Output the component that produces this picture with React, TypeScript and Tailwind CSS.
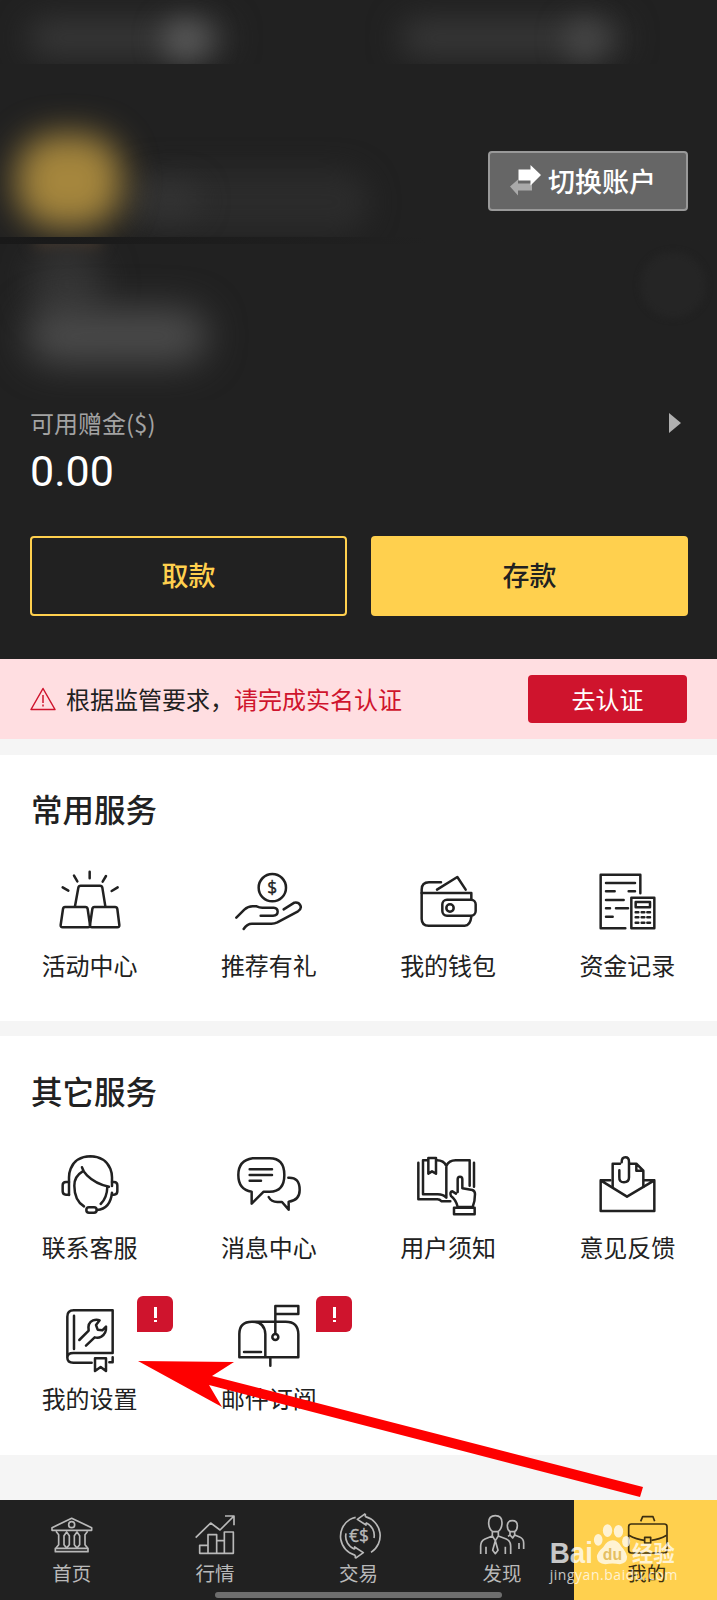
import React from "react";

type ServiceItem = {
  label: string;
  viewBox: string;
  icon: React.ReactNode;
  alert?: boolean;
};

const commonServices: ServiceItem[] = [
  {
    label: "活动中心",
    viewBox: "161 42 216 216",
    icon: (
      <>
        <path d="M187 112l17 10M221 77l10 17M268 65v20M317 78l-10 17M352 112l-18 11" />
        <path d="M224 169l10-56q1-6 7-6h58q6 0 7 6l9 56" />
        <path d="M194 171h61q6 0 7 6l7 48q1 7-6 7h-76q-7 0-6-7l7-48q1-6 6-6z" />
        <path d="M282 171h62q6 0 7 6l6 48q1 7-6 7h-76q-7 0-6-7l7-48q1-6 6-6z" />
      </>
    ),
  },
  {
    label: "推荐有礼",
    viewBox: "699 42 216 216",
    icon: (
      <>
        <circle cx="817" cy="113" r="41" />
        <text
          x="817"
          y="131"
          textAnchor="middle"
          fontSize="52"
          fill="currentColor"
          stroke="currentColor"
          strokeWidth="1"
          className="font-['Open_Sans',sans-serif]"
        >
          $
        </text>
        <path d="M709 203l24-24q11-10 25-10h12q8 4 17 4h34q12 1 12 12t-14 12h-37" />
        <path d="M731 237q10-16 25-16h58q10 0 18-4l62-33q12-8 7-18t-18-8l-32 20" />
      </>
    ),
  },
  {
    label: "我的钱包",
    viewBox: "165 42 216 216",
    icon: (
      <>
        <path d="M343 147v-18H194v77q0 21 21 21h108q17 0 20-27" />
        <path d="M194 129v-10q0-22 22-22h36M240 119l61-38 25 38" />
        <rect x="256" y="149" width="100" height="48" rx="14" />
        <circle cx="279" cy="174" r="11" />
      </>
    ),
  },
  {
    label: "资金记录",
    viewBox: "703 42 216 216",
    icon: (
      <>
        <path d="M806 235h-74V74h119v56M748 99h87M748 124h26M816 124h19M748 150h53M748 175h12M778 175h36M748 200h20" />
        <rect x="824" y="143" width="69" height="92" />
        <rect x="837" y="156" width="43" height="16" />
        <path d="M837 187h8M855 187h8M872 187h8M837 202h8M855 202h8M872 202h8M837 218h8M855 218h8M872 218h8" />
      </>
    ),
  },
];

const otherServices: ServiceItem[] = [
  {
    label: "联系客服",
    viewBox: "161 48 216 216",
    icon: (
      <>
        <path d="M206 195v-53q0-14 5-26 15-36 59-37 44 1 60 37 5 12 5 26v26" />
        <path d="M206 156h-9q-10 0-10 10v18q0 10 10 10h9M335 156h6q10 0 10 10v18q0 10-10 10h-6" />
        <path d="M251 229q-29-18-29-62 0-28 24-42M245 112q3 12 15 24 26 26 66 34M321 171q-1 33-20 51M335 188q-5 49-45 52" />
        <rect x="258" y="232" width="31" height="16" rx="8" />
      </>
    ),
  },
  {
    label: "消息中心",
    viewBox: "699 48 216 216",
    icon: (
      <>
        <path d="M758 85h51q44 0 44 50t-44 50h-18l-36 36v-36q-40-6-40-50t43-50z" />
        <path d="M749 118h67M749 135h67M749 152h34" />
        <path d="M865 143q34-2 34 37 0 31-33 35v24l-20-23h-14q-18 0-26-15" />
      </>
    ),
  },
  {
    label: "用户须知",
    viewBox: "165 48 216 216",
    icon: (
      <>
        <path d="M212 91h-14v102h44q17 0 26 10V108q-8-17-28-17M268 108q8-17 28-17h42v76M351 98v72M184 98v110h57q7 0 13 6h26" />
        <path d="M214 84h23v47l-12-7-11 7z" />
        <path d="M302 186v-38q0-8 7-8t7 8v27l30 5q8 3 8 12 0 22-7 39h-45q-5-22-20-33-5-12 4-14l11 7" />
        <rect x="291" y="233" width="62" height="20" />
      </>
    ),
  },
  {
    label: "意见反馈",
    viewBox: "703 48 216 216",
    icon: (
      <>
        <path d="M761 151h-29v92h161v-92h-31M732 151l79 49 82-49" />
        <path d="M768 170v-69h22M820 101h19l21 21v48M839 103v19h19" />
        <path d="M795 97q0-15 11-15t11 13v47q0 15-15 15t-14-16v-20" />
      </>
    ),
  },
  {
    label: "我的设置",
    viewBox: "161 51 216 216",
    alert: true,
    icon: (
      <>
        <path d="M337 219V91H220q-19 0-19 19v123q0 15 18 15h55M337 219H219q-18 0-18 14M337 232v15h-10M221 107v100" />
        <path d="M284 235h33v38l-16-12-17 12z" />
        <path d="M237 180l28-28q-4-24 13-31 11-4 20 0l-11 14 5 14 14 2 11-11q2 20-14 30-9 5-20 2l-26 25" />
      </>
    ),
  },
  {
    label: "邮件订阅",
    viewBox: "699 51 216 216",
    alert: true,
    icon: (
      <>
        <path d="M718 232v-70q0-37 38-37t40 37v70zM756 125h68M829 125h28q38 0 38 38v69h-99M732 216h51M811 232v25" />
        <path d="M826 160V78h69v24h-66" />
        <circle cx="826" cy="171" r="9" />
      </>
    ),
  },
];

const tabs = [
  {
    label: "首页",
    viewBox: "143 96 144 144",
    icon: (
      <>
        <path d="M155 143l59-28 60 28v8H155zM165 205h98v10h-98z" />
        <circle cx="214" cy="134" r="9" />
        <path d="M167 154l8 10v30l-8 10M262 154l-8 10v30l8 10M199 156l8 11v27l-8 10-8-10v-27zM230 156l8 11v27l-8 10-8-10v-27z" />
      </>
    ),
  },
  {
    label: "行情",
    viewBox: "573 96 144 144",
    icon: (
      <path d="M587 173l45-44 28 21 42-42M675 108h27v28M624 196h-25v24h101v-64h-27v64M624 220v-56h26v56M650 182h23" />
    ),
  },
  {
    label: "交易",
    viewBox: "-17 96 144 144",
    icon: (
      <>
        <path d="M77 110a59 59 0 0 1 17 107M79 128a42 42 0 0 1 24 46M77 101l-24 17 26 17v-7M77 101v9" />
        <path d="M47 226a59 59 0 0 1-17-107q8-5 18-7M45 208a42 42 0 0 1-26-48M47 235l24-17-26-17v7M47 235v-9" />
        <text
          x="58"
          y="186"
          textAnchor="middle"
          fontSize="52"
          fill="currentColor"
          stroke="currentColor"
          strokeWidth="1"
          className="font-['Open_Sans',sans-serif]"
        >
          €$
        </text>
      </>
    ),
  },
  {
    label: "发现",
    viewBox: "414 96 144 144",
    icon: (
      <>
        <path d="M466 107q20 0 20 21 0 18-12 27h-16q-12-9-12-27 0-21 20-21z" />
        <path d="M457 155v13l-22 9q-13 6-13 21v24M475 155v13l24 9q13 6 13 21v24M438 200v22M496 200v22M457 168l9 14 9-14M466 182l-8 29 8 10 8-10z" />
        <path d="M517 122q15 0 15 15 0 12-8 18h-14q-8-6-8-18 0-15 15-15zM510 155v10l-6 4M524 155v10l15 6q12 5 12 18v18M537 189v18M510 165l8 9 6-9" />
      </>
    ),
  },
  {
    label: "我的",
    viewBox: "849 96 144 144",
    active: true,
    icon: (
      <>
        <rect x="866" y="132" width="115" height="87" rx="8" />
        <path d="M902 124l6-14h31l5 14M867 166q22 13 46 15M980 166q-22 13-46 15" />
        <rect x="914" y="172" width="18" height="17" />
      </>
    ),
  },
];

const Service = ({ item }: { item: ServiceItem }) => (
  <div className="relative flex flex-col items-center">
    <svg
      viewBox={item.viewBox}
      className="h-[72px] w-[72px] overflow-visible"
      fill="none"
      stroke="currentColor"
      strokeWidth="7.500"
      strokeLinecap="round"
      strokeLinejoin="round"
    >
      {item.icon}
    </svg>
    <span className="mt-[11px] mb-[2px] text-2xl leading-9">{item.label}</span>
    {item.alert && (
      <span className="absolute -top-px left-[137px] flex h-9 w-9 items-center justify-center rounded-md rounded-bl-none bg-[#cf142d]">
        <span className="flex flex-col items-center gap-[2px]">
          <i className="block h-[11px] w-[3px] bg-white" />
          <i className="block h-[2px] w-[3px] bg-white" />
        </span>
      </span>
    )}
  </div>
);

const ServiceGrid = ({ items }: { items: ServiceItem[] }) => (
  <div className="mt-8 grid grid-cols-4 gap-y-[30px]">
    {items.map((item) => (
      <Service key={item.label} item={item} />
    ))}
  </div>
);

const Header = () => (
  <header className="h-[659px] bg-[#212121] text-white">
    {/* blurred status bar */}
    <div className="relative h-16 overflow-hidden">
      <div className="absolute left-7 top-5 h-9 w-[200px] rounded-full bg-[#383838] blur-[16px]" />
      <div className="absolute left-[162px] top-5 h-10 w-12 rounded-full bg-[#585858] blur-[14px]" />
      <div className="absolute left-[400px] top-5 h-9 w-[225px] rounded-full bg-[#383838] blur-[16px]" />
      <div className="absolute left-[565px] top-5 h-10 w-10 rounded-full bg-[#484848] blur-[14px]" />
    </div>

    <div className="relative h-[173px] overflow-hidden">
      <div className="absolute left-[120px] top-[106px] h-16 w-[250px] rounded-full bg-[#2b2b2b] blur-[14px]" />
      <div className="absolute left-[140px] top-[118px] h-9 w-[60px] rounded-full bg-[#333] blur-[14px]" />
      <div className="absolute left-[16px] top-[70px] h-[94px] w-[106px] rounded-[40px] bg-[#a5863d] blur-[17px]" />
      <div className="flex justify-end pr-[29px] pt-[87px]">
        <button className="flex h-[60px] w-[200px] items-center rounded border-2 border-[#999] bg-[#666] pl-[20px] text-[27px] font-medium">
          <svg viewBox="0 0 32 32" className="mr-[6px] h-8 w-8">
            <path d="M0 21.500l8-7v4h14v7H8v5z" fill="#aaa" />
            <path d="M8.500 4.500h12V0L31 10 20.500 20.500v-5h-12z" fill="#fff" />
          </svg>
          切换账户
        </button>
      </div>
    </div>

    <div className="h-[7px] bg-gradient-to-r from-[#191919] to-[#212121] to-60%" />

    <div className="relative h-[156px] overflow-hidden">
      <div className="absolute -top-4 left-9 h-5 w-16 bg-[#4a3a2c] blur-[8px]" />
      <div className="absolute left-[30px] top-0 h-20 w-[74px] rounded-full bg-[#333] blur-[16px]" />
      <div className="absolute left-[26px] top-[64px] h-[56px] w-[182px] rounded-full bg-[#4a4a4a] blur-[18px]" />
      <div className="absolute left-[640px] top-2 h-[66px] w-[66px] rounded-full bg-[#252525] blur-[3px]" />
    </div>

    <div className="px-[30px]">
      <div className="flex h-[46px] items-center justify-between pr-[6px] text-2xl text-[#a3a3a3]">
        <span>可用赠金($)</span>
        <svg viewBox="0 0 12 20" className="h-5 w-3" fill="#b0b0b0">
          <path d="M0 0l12 10L0 20z" />
        </svg>
      </div>
      <p className="h-[52px] font-[Roboto,'Noto_Sans_CJK_SC',sans-serif] text-[43px] leading-[50px]">
        0.00
      </p>
      <div className="-mr-px mt-[37.5px] grid grid-cols-2 gap-6 text-[27px] font-medium">
        <button className="h-20 rounded border-2 border-[#ffd04e] text-[#ffd04e]">
          取款
        </button>
        <button className="h-20 rounded bg-[#ffd04e] text-[#212121]">
          存款
        </button>
      </div>
    </div>
  </header>
);

const VerifyBanner = () => (
  <div className="flex h-20 items-center bg-[#ffdee1] pl-[30px] pr-[30px] text-2xl">
    <svg
      viewBox="0 0 26 24"
      className="mr-[10px] h-6 w-[26px] text-[#cf142d]"
      fill="none"
      stroke="currentColor"
      strokeWidth="1.500"
      strokeLinejoin="round"
    >
      <path d="M13 1.500L25 22.500H1zM13 8v8M13 17.500v2" />
    </svg>
    <span>根据监管要求，</span>
    <span className="text-[#cf142d]">请完成实名认证</span>
    <button className="ml-auto h-12 w-[159px] rounded bg-[#cf142d] text-white">
      去认证
    </button>
  </div>
);

const Watermark = () => (
  <svg
    viewBox="620 120 400 200"
    className="absolute left-[547px] top-[20px] h-[67px] w-[133px]"
    fill="#fff"
    fillOpacity="0.75"
  >
    <text
      x="628"
      y="250"
      fontSize="87"
      fontWeight="700"
      textLength="130"
      lengthAdjust="spacingAndGlyphs"
      className="font-['Liberation_Sans',sans-serif]"
    >
      Bai
    </text>
    <ellipse cx="774" cy="179" rx="13" ry="18" />
    <ellipse cx="802" cy="151" rx="14" ry="19" />
    <ellipse cx="835" cy="153" rx="14" ry="19" />
    <ellipse cx="858" cy="184" rx="12" ry="17" />
    <path d="M817 180q16 0 26 18 16 18 18 32 0 20-22 22-22-4-44 0-24 0-25-22 1-14 19-29 12-21 28-21z" />
    <text
      x="788"
      y="241"
      fontSize="50"
      fontWeight="700"
      textLength="58"
      lengthAdjust="spacingAndGlyphs"
      fill="#dcae3c"
      className="font-['Liberation_Sans',sans-serif]"
    >
      du
    </text>
    <text x="876" y="243" fontSize="64" fontWeight="700">
      经验
    </text>
    <text
      x="628"
      y="300"
      fontSize="42"
      textLength="384"
      className="font-['Open_Sans',sans-serif]"
    >
      jingyan.baidu.com
    </text>
  </svg>
);

const TabBar = () => (
  <nav className="relative grid h-[100px] grid-cols-5 bg-[#212121] text-[#b9b9b9]">
    {tabs.map((tab) => (
      <div
        key={tab.label}
        className={`flex flex-col items-center pt-3 ${
          tab.active ? "bg-[#ffd04e] pl-[3px] text-[#3d2f10]" : ""
        }`}
      >
        <svg
          viewBox={tab.viewBox}
          className="h-12 w-12"
          fill="none"
          stroke="currentColor"
          strokeWidth="5"
          strokeLinejoin="round"
        >
          {tab.icon}
        </svg>
        <span className="mt-px text-[19.5px] leading-6">{tab.label}</span>
      </div>
    ))}
    <div className="absolute bottom-[2px] left-[215px] h-[6px] w-[287px] rounded-full bg-[#6e6e6e]" />
    <Watermark />
  </nav>
);

const App = () => {
  return (
    <div className="relative h-[1600px] w-[717px] overflow-hidden bg-[#f5f5f5] font-['Noto_Sans_CJK_SC',sans-serif] text-[#212121]">
      <Header />
      <VerifyBanner />

      <section className="mt-4 h-[266px] bg-white pt-[29px]">
        <h2 className="pl-[31px] text-[31.5px] font-medium leading-[48px]">
          常用服务
        </h2>
        <ServiceGrid items={commonServices} />
      </section>

      <section className="mb-[45px] mt-[15px] h-[419px] bg-white pt-[30px]">
        <h2 className="pl-[31px] text-[31.5px] font-medium leading-[48px]">
          其它服务
        </h2>
        <ServiceGrid items={otherServices} />
      </section>

      <TabBar />

      {/* pointer to the settings entry */}
      <svg
        viewBox="0 0 510 140"
        className="absolute left-[136px] top-[1360px] h-[140px] w-[510px]"
        fill="#fe0000"
      >
        <path d="M2 1l96 1-22 14 431 111-3 10L73 25l13 22z" />
      </svg>
    </div>
  );
};

export default App;
